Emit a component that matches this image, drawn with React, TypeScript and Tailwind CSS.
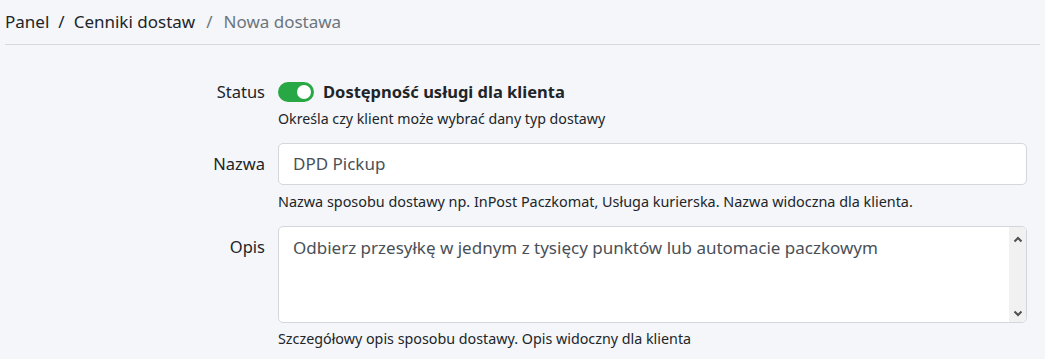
export default function App() {
  return (
    <main
      className="min-h-[359px] bg-[#f4f6f9] text-[#212529]"
      style={{ fontFamily: "'Noto Sans', sans-serif" }}
    >
      <nav className="mx-[5px] flex h-[45px] items-center border-b border-[#d6d9dd] text-[17px] leading-[24px]">
        <span>Panel</span>
        <span className="px-[9px]">/</span>
        <span>Cenniki dostaw</span>
        <span className="px-[11px] text-[#6c757d]">/</span>
        <span className="text-[#6c757d]">Nowa dostawa</span>
      </nav>

      <section className="grid grid-cols-[265px_1fr] gap-x-[13px] pr-[18px] pt-[36px]">
        <label className="text-right text-[16.5px] leading-[22px]">Status</label>
        <div>
          <div className="flex items-center gap-[9px]">
            <span className="relative inline-block h-[20px] w-[36px] rounded-full bg-[#28a745]">
              <span className="absolute right-[3px] top-[3px] h-[14px] w-[14px] rounded-full bg-white" />
            </span>
            <span className="text-[16.5px] font-bold leading-[22px]">Dostępność usługi dla klienta</span>
          </div>
          <p className="mt-[6px] text-[14.2px] leading-[20px]">Określa czy klient może wybrać dany typ dostawy</p>
        </div>

        <label className="mt-[14px] pt-[10px] text-right text-[16.5px] leading-[22px]">Nazwa</label>
        <div className="mt-[14px]">
          <input
            defaultValue="DPD Pickup"
            className="h-[42px] w-full rounded-[5px] border border-[#d3d7dc] bg-white px-[14px] pb-[2px] text-[17px] text-[#495057] outline-none"
          />
          <p className="mt-[7px] text-[14.4px] leading-[20px]">
            Nazwa sposobu dostawy np. InPost Paczkomat, Usługa kurierska. Nazwa widoczna dla klienta.
          </p>
        </div>

        <label className="mt-[14px] pt-[10px] text-right text-[16.5px] leading-[22px]">Opis</label>
        <div className="mt-[14px]">
          <div className="flex h-[97px] overflow-hidden rounded-[5px] border border-[#d3d7dc] bg-white">
            <textarea
              defaultValue="Odbierz przesyłkę w jednym z tysięcy punktów lub automacie paczkowym"
              rows={3}
              className="block h-full flex-1 resize-none overflow-hidden px-[14px] py-[8px] text-[17px] leading-[26px] text-[#495057] outline-none"
            />
            <div className="flex w-[17px] flex-col items-center justify-between bg-[#f1f1f1] pb-[5px] pt-[9px]">
              <svg width="10" height="7" viewBox="0 0 10 7">
                <path d="M1.5 5.5 L5 2 L8.5 5.5" fill="none" stroke="#505050" strokeWidth="2" />
              </svg>
              <svg width="10" height="7" viewBox="0 0 10 7">
                <path d="M1.5 1.5 L5 5 L8.5 1.5" fill="none" stroke="#505050" strokeWidth="2" />
              </svg>
            </div>
          </div>
          <p className="mt-[6px] text-[14.3px] leading-[20px]">Szczegółowy opis sposobu dostawy. Opis widoczny dla klienta</p>
        </div>
      </section>
    </main>
  );
}
